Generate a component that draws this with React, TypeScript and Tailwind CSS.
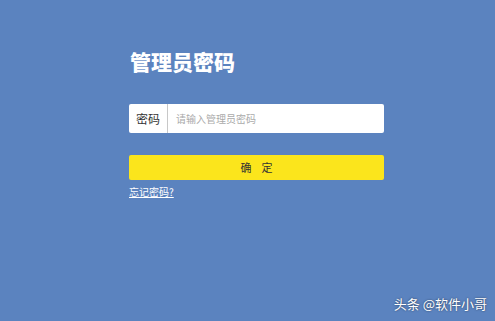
import React from "react";

export default function App() {
  const cjk = { fontFamily: '"Noto Sans CJK SC", "Noto Sans", sans-serif' };
  return (
    <div className="relative w-[495px] h-[321px] bg-[#5b83bf] overflow-hidden" style={cjk}>
      <div className="ml-[129px] w-[255px] pt-[47px] flex flex-col">
        <h1 className="text-[21px] leading-[28px] font-black text-white ml-[1px]">管理员密码</h1>
        <div className="mt-[29px] h-[29px] flex bg-white rounded-[2px] overflow-hidden">
          <div className="w-[39px] flex items-center justify-center text-[12px] text-[#333] border-r border-[#c8c8c8]">密码</div>
          <div className="flex-1 flex items-center pl-[8px] text-[10px] text-[#aaa]">请输入管理员密码</div>
        </div>
        <button className="mt-[22px] h-[25px] bg-[#fbe51c] rounded-[2px] text-[11px] text-[#333] flex items-center justify-center tracking-[10px] pl-[10px]">
          确定
        </button>
        <a className="mt-[5px] text-[10px] leading-[14px] text-white underline self-start">忘记密码?</a>
      </div>
      <div className="absolute right-[8px] bottom-[9px] text-[13px] leading-[16px] text-white" style={{ textShadow: "0 0 2px rgba(0,0,0,0.6)" }}>
        头条 @软件小哥
      </div>
    </div>
  );
}
